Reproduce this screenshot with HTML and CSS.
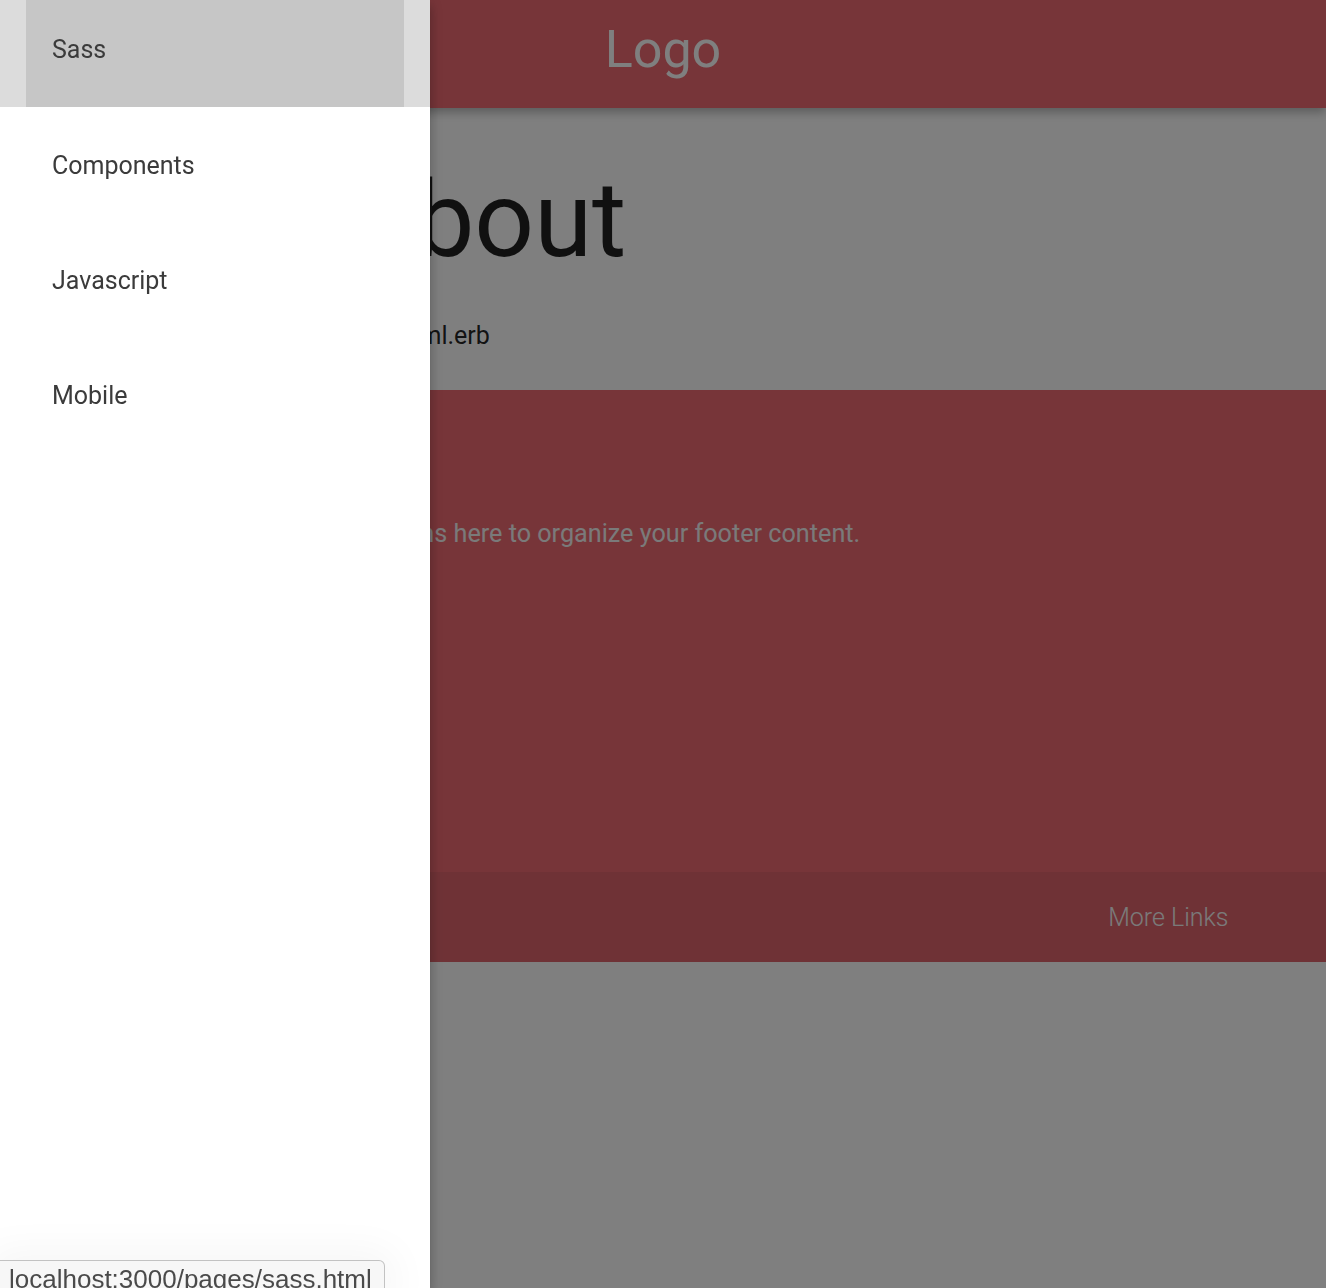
FILE: index.html
```html
<!DOCTYPE html>
<html lang="en">
<head>
    <meta charset="UTF-8">
    <meta name="viewport" content="width=device-width, initial-scale=1.0">
    <title>Pages#about</title>
    <link rel="stylesheet" href="styles.css">
</head>
<body>
    <nav class="navbar">
        <a href="#" class="brand-logo">Logo</a>
    </nav>

    <main class="page-body">
        <h1>Pages#about</h1>
        <p>Find me in app/views/pages/about.html.erb</p>
    </main>

    <footer class="page-footer">
        <div class="container">
            <div class="footer-col">
                <h5>Footer Content</h5>
                <p>You can use rows and columns here to organize your footer content.</p>
            </div>
            <div class="footer-col links-col">
                <h5>Links</h5>
                <ul>
                    <li><a href="#!">Link 1</a></li>
                    <li><a href="#!">Link 2</a></li>
                    <li><a href="#!">Link 3</a></li>
                    <li><a href="#!">Link 4</a></li>
                </ul>
            </div>
        </div>
        <div class="footer-copyright">
            <div class="container copyright-row">
                <span>© 2014 Copyright Text</span>
                <a href="#!" class="more-links">More Links</a>
            </div>
        </div>
    </footer>

    <div class="sidenav-overlay"></div>

    <ul class="sidenav">
        <li class="active"><a href="/pages/sass.html">Sass</a></li>
        <li><a href="#">Components</a></li>
        <li><a href="#">Javascript</a></li>
        <li><a href="#">Mobile</a></li>
    </ul>

    <div class="status-bubble">localhost:3000/pages/sass.html</div>
</body>
</html>
```

FILE: styles.css
```css
body {
    font-family: Roboto, "Noto Sans", sans-serif;
    background-color: #fff;
    color: rgba(0,0,0,0.87);
    margin: 0;
    padding: 0;
    min-height: 100vh;
}
a {
    text-decoration: none;
}

/* navbar */
.navbar {
    height: 108px;
    background-color: #ee6a72;
    display: flex;
    justify-content: center;
    align-items: center;
    box-shadow: 0 4px 10px rgba(0,0,0,0.3);
    position: relative;
}
.brand-logo {
    color: #fff;
    font-size: 52px;
    line-height: 1;
    padding-bottom: 8px;
}

/* main */
.page-body {
    height: 282px;
    box-sizing: border-box;
    padding: 60px 2px 0;
}
.page-body h1 {
    font-size: 105px;
    font-weight: 400;
    line-height: 1;
    margin: 0;
}
.page-body p {
    font-size: 25px;
    line-height: 1.2;
    margin: 48px 0 0;
}

/* footer */
.page-footer {
    background-color: #ee6a72;
    color: #f5f5f5;
}
.container {
    margin: 0 auto;
    width: 85%;
}
.page-footer > .container {
    padding: 36px 0 50px;
}
.footer-col h5 {
    font-size: 41px;
    font-weight: 400;
    line-height: 1.2;
    margin: 0;
    color: #fff;
}
.footer-col p {
    font-size: 25.2px;
    line-height: 1.5;
    margin: 40px 0 0;
}
.links-col {
    margin-top: 21px;
}
.links-col h5 {
    margin-bottom: 15px;
}
.links-col ul {
    list-style: none;
    margin: 0;
    padding: 0;
}
.links-col li {
    line-height: 46px;
    font-size: 25px;
}
.links-col a {
    color: #f5f5f5;
}
.footer-copyright {
    background-color: rgba(51,51,51,0.08);
    height: 90px;
    font-size: 25px;
    font-weight: 300;
}
.copyright-row {
    height: 100%;
    display: flex;
    justify-content: space-between;
    align-items: center;
}
.more-links {
    color: #f5f5f5;
    margin-right: -2px;
}

/* sidenav */
.sidenav-overlay {
    position: fixed;
    top: 0;
    left: 0;
    right: 0;
    bottom: 0;
    background-color: rgba(0,0,0,0.5);
}
.sidenav {
    position: fixed;
    top: 0;
    left: 0;
    width: 430px;
    height: 100%;
    margin: 0;
    padding: 0;
    list-style: none;
    background-color: #fff;
    box-shadow: 0 8px 10px 1px rgba(0,0,0,0.14), 0 3px 14px 2px rgba(0,0,0,0.12), 0 5px 5px -3px rgba(0,0,0,0.3);
}
.sidenav li {
    height: 115px;
}
.sidenav li a {
    display: flex;
    align-items: center;
    height: 100%;
    box-sizing: border-box;
    padding-left: 52px;
    padding-top: 2px;
    font-size: 25px;
    color: #3b3b3b;
}
.sidenav li.active {
    height: 107px;
    background-color: #dcdcdc;
    padding: 0 26px;
}
.sidenav li.active a {
    background-color: #c6c6c6;
    padding: 0 0 8px 26px;
}

/* browser status bubble */
.status-bubble {
    position: fixed;
    left: 0;
    bottom: -10px;
    width: 385px;
    height: 38px;
    box-sizing: border-box;
    padding: 3px 0 0 9px;
    background-color: #f7f7f7;
    border: 1px solid #c2c2c2;
    border-left: none;
    border-top-right-radius: 6px;
    font-family: "Liberation Sans", Arial, sans-serif;
    font-size: 26px;
    line-height: 30px;
    color: #4a4a4a;
    white-space: nowrap;
    overflow: hidden;
    box-shadow: 0 0 40px 10px rgba(0,0,0,0.04);
}
```
